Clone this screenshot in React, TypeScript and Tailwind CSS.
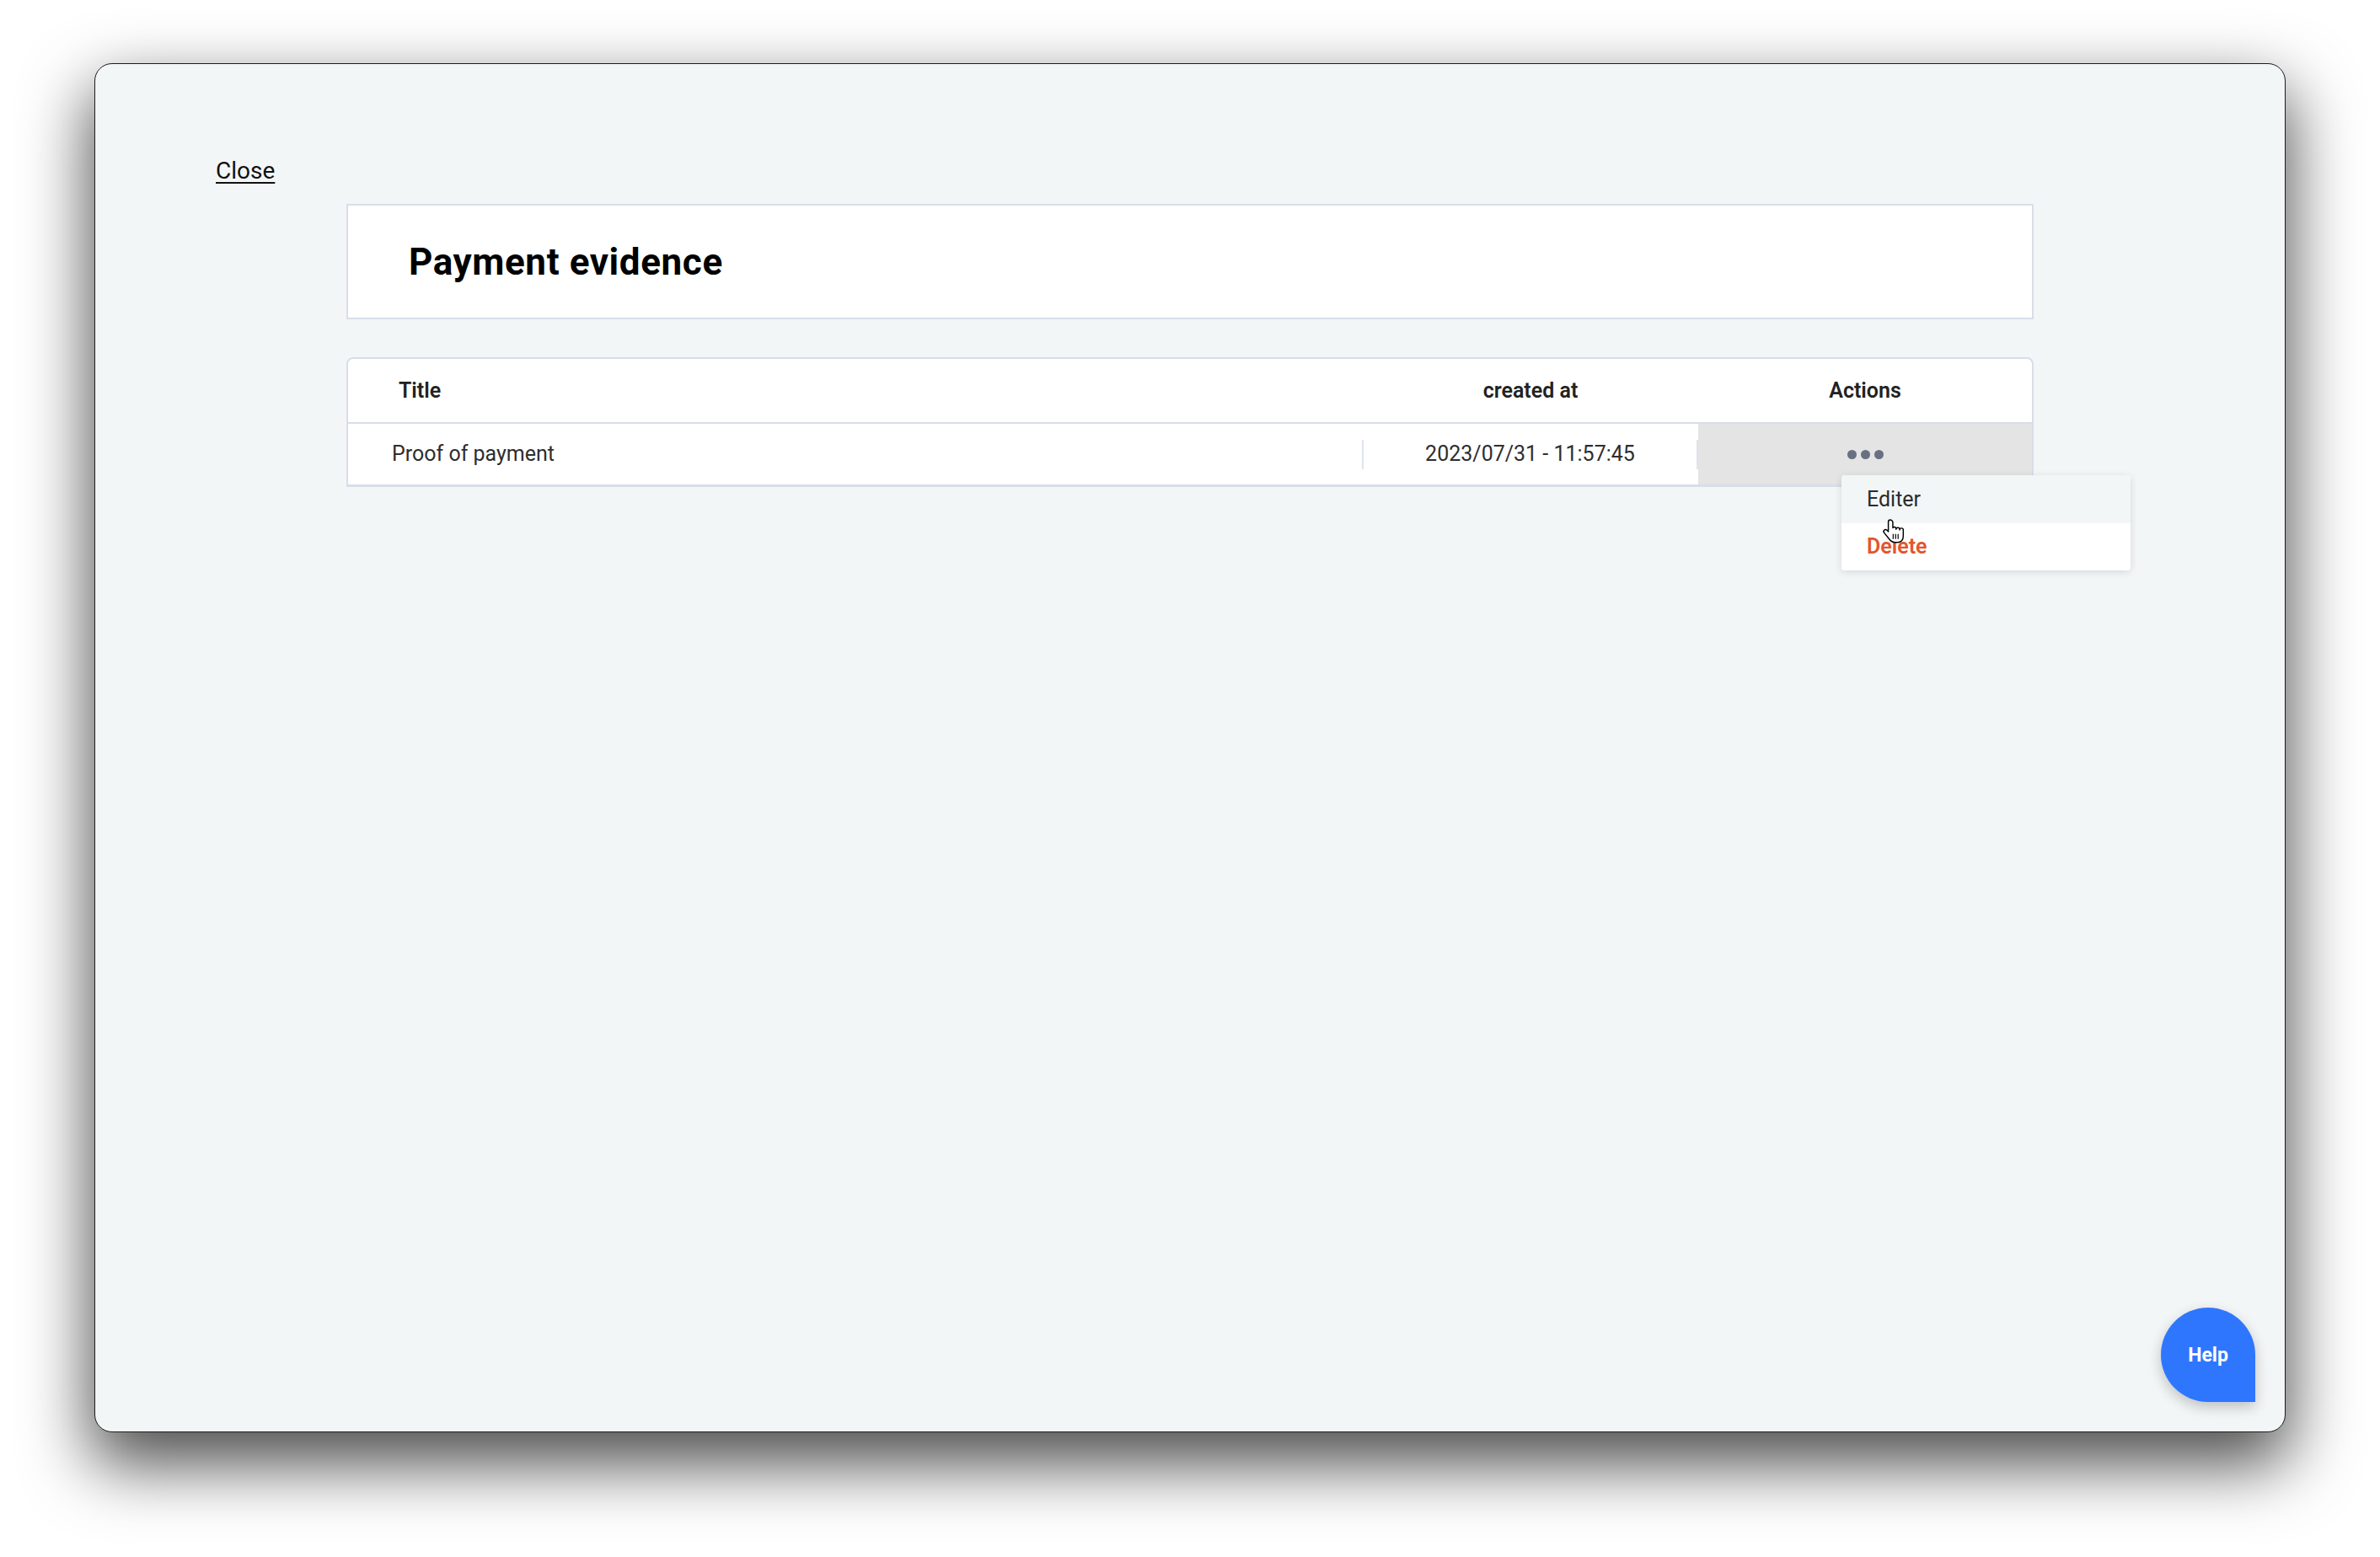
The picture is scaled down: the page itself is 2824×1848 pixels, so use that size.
const columns = [
  { key: 'created', label: 'created at' },
  { key: 'actions', label: 'Actions' },
];

function HandCursor() {
  return (
    <svg
      className="absolute left-[218px] top-[112px] z-20 h-[32px] w-[28px]"
      viewBox="0 0 20 24"
      fill="none"
    >
      <path
        d="M7 1.5c-1 0-1.8.8-1.8 1.8V12l-1.2-1.3c-.7-.7-1.8-.7-2.5 0-.6.6-.6 1.6 0 2.3L5.5 18c1.2 1.7 2.8 3.5 5.5 3.5h2.5c3 0 5-2.3 5-5.3v-5.7c0-.9-.7-1.6-1.6-1.6-.9 0-1.6.7-1.6 1.6V10c0-.9-.7-1.6-1.6-1.6-.9 0-1.6.7-1.6 1.6v-.5c0-.9-.7-1.6-1.6-1.6-.6 0-1 .3-1.3.7V3.3C8.8 2.3 8 1.5 7 1.5z"
        fill="#fff"
        stroke="#000"
        strokeWidth="1.1"
        strokeLinejoin="round"
      />
      <path d="M9.5 14v4.5M11.7 14v4.5M13.9 14v4.5" stroke="#000" strokeWidth="0.9" />
    </svg>
  );
}

function ActionsMenu() {
  return (
    <div className="absolute left-[170px] top-[61px] z-10 w-[343px] overflow-hidden rounded-[4px] bg-white shadow-[0_2px_10px_rgba(0,0,0,0.12)]">
      <div className="flex h-[57px] items-center bg-[#f3f6f7] pl-[30px] text-[25px] text-[#2b2b2b]">
        Editer
      </div>
      <div className="flex h-[56px] items-center bg-white pl-[30px] text-[25px] font-semibold text-[#e4552b]">
        Delete
      </div>
    </div>
  );
}

export default function App() {
  return (
    <div className="h-[1848px] w-[2824px] overflow-hidden bg-white pl-[112px] pt-[75px] font-[Roboto,'Liberation_Sans',sans-serif]">
      <div className="relative h-[1625px] w-[2600px] rounded-[21px] border border-[#1c1c1c] bg-[#f3f6f7] pt-[113px] shadow-[0_34px_80px_4px_rgba(0,0,0,0.7)]">
        <a className="ml-[143px] block w-fit cursor-pointer text-[28px] leading-none text-[#111] underline decoration-[2px] underline-offset-[4px]">
          Close
        </a>

        <div className="ml-[298px] mt-[25px] w-[2002px]">
          <div className="flex h-[137px] items-center border-2 border-[#d8dde9] bg-white pl-[72px]">
            <h1 className="text-[44px] font-bold leading-none tracking-[0.6px] text-black">
              Payment evidence
            </h1>
          </div>

          <div className="mt-[45px] rounded-t-[8px] border-2 border-b-[3px] border-[#d8dde9] bg-white">
            <div className="grid h-[77px] grid-cols-[1fr_398px_396px] items-center border-b-2 border-[#d8dde9] text-[25px] font-semibold text-[#222]">
              <div className="pl-[60px]">Title</div>
              {columns.map((col) => (
                <div key={col.key} className="text-center">
                  {col.label}
                </div>
              ))}
            </div>

            <div className="flex h-[72px] items-center text-[25px] text-[#2e2e2e]">
              <div className="flex-1 pl-[52px]">Proof of payment</div>
              <div className="h-[35px] w-[2px] bg-[#e0e4ee]" />
              <div className="w-[395px] text-center">2023/07/31 - 11:57:45</div>
              <div className="h-[35px] w-[2px] bg-[#e0e4ee]" />
              <div className="relative flex w-[396px] self-stretch items-center justify-center bg-[#e4e4e4]">
                <div className="flex gap-[5px]">
                  <span className="h-[11px] w-[11px] rounded-full bg-[#687182]" />
                  <span className="h-[11px] w-[11px] rounded-full bg-[#687182]" />
                  <span className="h-[11px] w-[11px] rounded-full bg-[#687182]" />
                </div>
                <ActionsMenu />
                <HandCursor />
              </div>
            </div>
          </div>
        </div>

        <button className="absolute bottom-[35px] right-[35px] flex h-[112px] w-[112px] items-center justify-center rounded-tl-full rounded-tr-full rounded-bl-full rounded-br-[12px] bg-[#2f76ff] pt-[3px] text-[23px] font-bold text-white shadow-[0_6px_16px_rgba(0,0,0,0.22)]">
          Help
        </button>
      </div>
    </div>
  );
}
